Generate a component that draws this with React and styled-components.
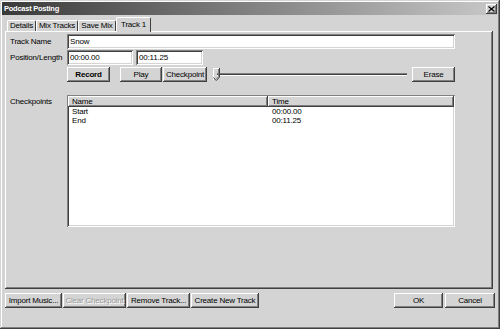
import React from "react";
import styled, { createGlobalStyle } from "styled-components";

const FACE = "#d4d4d4";
const FONT = `"Liberation Sans", Arial, sans-serif`;

const raised = `
  box-shadow: inset -1px -1px #404040, inset 1px 1px #fff,
    inset -2px -2px #808080, inset 2px 2px ${FACE};
`;

const sunken = `
  box-shadow: inset 1px 1px #808080, inset -1px -1px #fff,
    inset 2px 2px #404040, inset -2px -2px ${FACE};
`;

const GlobalStyle = createGlobalStyle`
  body {
    margin: 0;
    font-family: ${FONT};
    font-size: 8px;
    letter-spacing: -0.2px;
    background: ${FACE};
  }
`;

const Window = styled.div`
  width: 500px;
  height: 329px;
  box-sizing: border-box;
  padding: 2px;
  background: ${FACE};
  display: flex;
  flex-direction: column;
  box-shadow: inset -1px -1px #404040, inset 1px 1px ${FACE},
    inset -2px -2px #808080, inset 2px 2px #fff;
`;

const TitleBar = styled.div`
  height: 13px;
  display: flex;
  align-items: center;
  justify-content: space-between;
  padding: 0 1px 0 2px;
  background: linear-gradient(to right, #3a3a3a, #c8c8c8);
  color: #fff;
  font-weight: bold;
  font-size: 7.5px;
  letter-spacing: -0.25px;
`;

const CloseButton = styled.div`
  width: 11px;
  height: 10px;
  background: ${FACE};
  display: flex;
  align-items: center;
  justify-content: center;
  ${raised}
`;

const TabStrip = styled.div`
  height: 16px;
  display: flex;
  align-items: flex-end;
  padding-left: 5px;
`;

const Tab = styled.div`
  width: ${(p) => p.$w}px;
  height: ${(p) => (p.$active ? 15 : 11)}px;
  box-sizing: border-box;
  margin-bottom: ${(p) => (p.$active ? -1 : 0)}px;
  position: relative;
  z-index: ${(p) => (p.$active ? 2 : 1)};
  background: ${FACE};
  border-top: 1px solid #fff;
  border-left: 1px solid #fff;
  border-right: 1px solid #404040;
  border-radius: 2px 2px 0 0;
  display: flex;
  justify-content: center;
  padding-top: ${(p) => (p.$active ? 2 : 0)}px;
  line-height: 10px;
  white-space: nowrap;
`;

const Panel = styled.div`
  flex: 1;
  margin: 0 5px 0 3px;
  padding: 3px 38px 0 5px;
  box-shadow: inset -1px -1px #404040, inset 1px 1px #fff,
    inset -2px -2px #808080;
  display: flex;
  flex-direction: column;
`;

const Row = styled.div`
  display: flex;
  align-items: ${(p) => (p.$top ? "flex-start" : "center")};
  margin-top: ${(p) => p.$gap || 0}px;
`;

const Label = styled.div`
  width: 57px;
  flex-shrink: 0;
  white-space: nowrap;
  padding-top: ${(p) => (p.$top ? 2 : 0)}px;
`;

const Input = styled.div`
  width: ${(p) => p.$w}px;
  height: 15px;
  box-sizing: border-box;
  background: #fff;
  padding: 0 3px;
  margin-right: ${(p) => p.$mr || 0}px;
  display: flex;
  align-items: center;
  ${sunken}
`;

const Button = styled.div`
  width: ${(p) => p.$w}px;
  height: 15px;
  box-sizing: border-box;
  background: ${FACE};
  display: flex;
  align-items: center;
  justify-content: center;
  white-space: nowrap;
  margin-right: ${(p) => p.$mr || 0}px;
  font-weight: ${(p) => (p.$bold ? "bold" : "normal")};
  color: ${(p) => (p.$disabled ? "#9a9a9a" : "#000")};
  text-shadow: ${(p) => (p.$disabled ? "1px 1px #fff" : "none")};
  ${raised}
`;

const Slider = styled.div`
  flex: 1;
  height: 15px;
  display: flex;
  align-items: center;
  margin: 0 5px 0 6px;
`;

const Thumb = styled.svg`
  width: 7px;
  height: 13px;
  margin-right: -3px;
  position: relative;
  z-index: 1;
  flex-shrink: 0;
`;

const Groove = styled.div`
  flex: 1;
  height: 3px;
  margin-top: -1px;
  box-sizing: border-box;
  border-top: 1px solid #808080;
  border-bottom: 1px solid #fff;
  background: #404040;
`;

const List = styled.div`
  width: 388px;
  height: 132px;
  box-sizing: border-box;
  padding: 1px 1px 2px 1px;
  background: #fff;
  ${sunken}
`;

const HeaderRow = styled.div`
  display: flex;
  height: 11px;
`;

const HeaderCell = styled.div`
  width: ${(p) => (p.$w ? `${p.$w}px` : "auto")};
  flex: ${(p) => (p.$w ? "none" : 1)};
  box-sizing: border-box;
  background: ${FACE};
  padding-left: 4px;
  line-height: 11px;
  ${raised}
`;

const DataRow = styled.div`
  display: flex;
  height: 9px;
  line-height: 9px;
  &:first-of-type {
    margin-top: 2px;
  }
`;

const Cell = styled.div`
  width: ${(p) => (p.$w ? `${p.$w}px` : "auto")};
  flex: ${(p) => (p.$w ? "none" : 1)};
  padding-left: 4px;
  box-sizing: border-box;
`;

const Footer = styled.div`
  height: 38px;
  box-sizing: border-box;
  padding: 4px 3px 0 3px;
  display: flex;
  justify-content: space-between;
  align-items: flex-start;
`;

const ButtonGroup = styled.div`
  display: flex;
  gap: ${(p) => p.$gap}px;
`;

const tabs = [
  { name: "Details", w: 29 },
  { name: "Mix Tracks", w: 42 },
  { name: "Save Mix", w: 38 },
  { name: "Track 1", w: 35, active: true },
];

const checkpoints = [
  { name: "Start", time: "00:00.00" },
  { name: "End", time: "00:11.25" },
];

export default function App() {
  return (
    <>
      <GlobalStyle />
      <Window>
        <TitleBar>
          <span>Podcast Posting</span>
          <CloseButton>
            <svg width="7" height="6" viewBox="0 0 7 6">
              <path d="M0.5 0.5 L6.5 5.5 M6.5 0.5 L0.5 5.5" stroke="#000" strokeWidth="1.2" />
            </svg>
          </CloseButton>
        </TitleBar>

        <TabStrip>
          {tabs.map((t) => (
            <Tab key={t.name} $w={t.w} $active={t.active}>
              {t.name}
            </Tab>
          ))}
        </TabStrip>

        <Panel>
          <Row>
            <Label>Track Name</Label>
            <Input $w={388}>Snow</Input>
          </Row>
          <Row $gap={1}>
            <Label>Position/Length</Label>
            <Input $w={66} $mr={3}>00:00.00</Input>
            <Input $w={67}>00:11.25</Input>
          </Row>
          <Row $gap={2}>
            <Label />
            <Button $w={43} $mr={10} $bold>
              Record
            </Button>
            <Button $w={42} $mr={1}>
              Play
            </Button>
            <Button $w={44}>Checkpoint</Button>
            <Slider>
              <Thumb viewBox="0 0 7 13">
                <path d="M0.5 12 V0.5 H6" fill={FACE} stroke="#fff" />
                <path d="M6.5 0 V9 L3.5 12.5" fill="none" stroke="#404040" />
                <path d="M5.5 1 V8.6 L3 11.2" fill="none" stroke="#808080" />
                <path d="M0.5 9.5 L3 12.5" fill="none" stroke="#404040" />
              </Thumb>
              <Groove />
            </Slider>
            <Button $w={43}>Erase</Button>
          </Row>
          <Row $gap={13} $top>
            <Label $top>Checkpoints</Label>
            <List>
              <HeaderRow>
                <HeaderCell $w={200}>Name</HeaderCell>
                <HeaderCell>Time</HeaderCell>
              </HeaderRow>
              {checkpoints.map((c) => (
                <DataRow key={c.name}>
                  <Cell $w={200}>{c.name}</Cell>
                  <Cell>{c.time}</Cell>
                </DataRow>
              ))}
            </List>
          </Row>
        </Panel>

        <Footer>
          <ButtonGroup $gap={1}>
            <Button $w={57}>Import Music...</Button>
            <Button $w={63} $disabled>
              Clear Checkpoint
            </Button>
            <Button $w={63}>Remove Track...</Button>
            <Button $w={68}>Create New Track</Button>
          </ButtonGroup>
          <ButtonGroup $gap={2}>
            <Button $w={49}>OK</Button>
            <Button $w={50}>Cancel</Button>
          </ButtonGroup>
        </Footer>
      </Window>
    </>
  );
}
